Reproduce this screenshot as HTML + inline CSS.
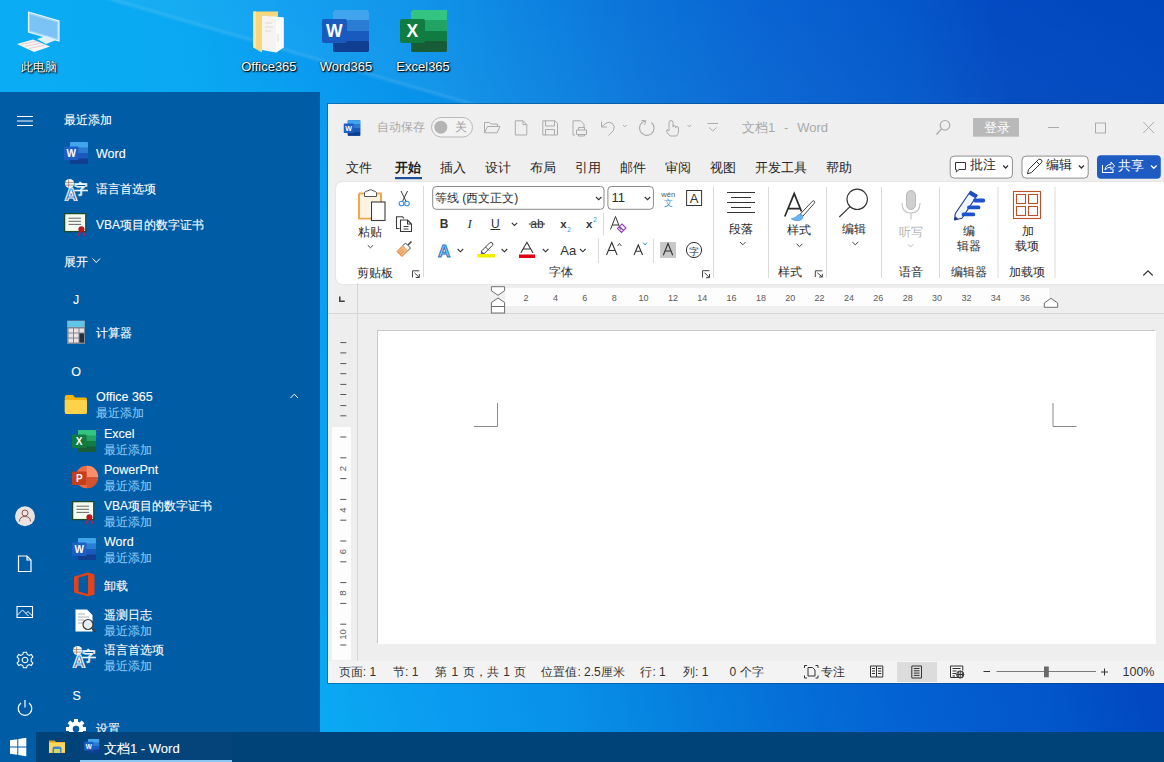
<!DOCTYPE html>
<html><head><meta charset="utf-8">
<style>
*{margin:0;padding:0;box-sizing:border-box}
html,body{width:1164px;height:762px;overflow:hidden}
body{position:relative;font-family:"Liberation Sans",sans-serif;background:#0a7ee0}
.a{position:absolute}
.t{position:absolute;white-space:nowrap;line-height:1}
#wall{left:0;top:0;width:1164px;height:762px;background:linear-gradient(78deg,#0ab0f5 0%,#0aa8f2 25.7%,#0a9cf0 34%,#0890e8 44%,#0682e0 51%,#0570d8 60%,#0462d2 69%,#0256c9 80%,#0149c1 87%,#0046bd 100%)}
#ray{left:0;top:0;width:1164px;height:762px;background:linear-gradient(196.2deg,rgba(255,255,255,0) 0%,rgba(255,255,255,.05) 27.45%,rgba(255,255,255,.13) 27.7%,rgba(255,255,255,0) 28.05%)}
#start{left:0;top:92px;width:320px;height:640px;background:#005ca4;color:#fff;overflow:hidden}
#start .t{margin-top:-92px}
#taskbar{left:0;top:732px;width:1164px;height:30px;background:#004379}
#word{left:328px;top:104px;width:836px;height:579px;background:#efefef;box-shadow:0 0 0 1px rgba(0,60,110,.45)}
.sm{font-size:12px;color:#fff;-webkit-text-stroke:0.2px rgba(255,255,255,.6)}
.sub{font-size:12px;color:#8cc6f4;-webkit-text-stroke:0.2px rgba(140,198,244,.6)}
.g{color:#262626}
.rb{font-size:12px;color:#2b2b2b}
.st{top:666px;font-size:12px;color:#333}
.tab{top:161px;font-size:13px;color:#262626}
.dl{font-size:12px;color:#fff;text-shadow:0 0 1.5px rgba(0,0,0,.85),1px 1px 1px rgba(0,0,0,.9),1px 1px 2px rgba(0,0,0,.5)}
</style></head><body>
<div id="wall" class="a"></div>
<div id="ray" class="a"></div>

<!-- desktop icons -->
<div id="desk">
<svg class="a" style="left:0;top:0" width="460" height="80" viewBox="0 0 460 80">
 <defs>
  <filter id="ts" x="-10%" y="-10%" width="120%" height="140%"><feDropShadow dx="1" dy="1" stdDeviation="0.6" flood-color="#000" flood-opacity="0.8"/></filter>
 </defs>
 <!-- this pc -->
 <polygon points="28.5,12 59,21 59,41 28.5,32" fill="#9fd6fb" stroke="#e8f6ff" stroke-width="1.2"/>
 <polygon points="30,14.5 57,22.5 57,38.5 30,30.5" fill="#7cc3f5"/>
 <polygon points="37,39 46,36 56,40 46,44" fill="#dff0fb"/>
 <polygon points="17,44 33,39.5 50,46.5 34,52" fill="#f3f6fa"/>
 <line x1="21" y1="44.5" x2="37" y2="41" stroke="#e9b9b0" stroke-width="0.7"/>
 <line x1="25" y1="46.5" x2="41" y2="43" stroke="#e9b9b0" stroke-width="0.7"/>
 <line x1="29" y1="48.5" x2="45" y2="45" stroke="#e9b9b0" stroke-width="0.7"/>
 <!-- folder -->
 <polygon points="253.3,11.6 278,11.6 278,18 262,15.5 262,52.5 253.3,47.5" fill="#f6d77c"/>
 <polygon points="253.3,11.6 256,11.6 256,48.5 253.3,47.5" fill="#fbe7a8"/>
 <polygon points="262,15.5 283.6,17.5 283.6,47.5 276,52.5 262,50" fill="#f6f4f0"/>
 <polygon points="271,16.5 283.6,17.5 283.6,47.5 276,52.5 276,19" fill="#fbfbfa"/>
 <path d="M265 23 H272 M265 27 H273 M265 31 H271 M278 34 V42" stroke="#d8d4cc" stroke-width="0.8"/>
 <!-- word -->
 <rect x="333" y="10" width="36" height="42" rx="2" fill="#185abd"/>
 <rect x="333" y="10" width="36" height="11" rx="2" fill="#41a5ee"/>
 <rect x="333" y="20" width="36" height="11" fill="#2b7cd3"/>
 <rect x="333" y="31" width="36" height="10" fill="#185abd"/>
 <rect x="333" y="41" width="36" height="11" rx="2" fill="#103f91"/>
 <rect x="322" y="19" width="25" height="24" rx="2" fill="#185abd"/>
 <text x="334.3" y="37.3" font-family="Liberation Sans" font-weight="bold" font-size="17.5" fill="#fff" text-anchor="middle">W</text>
 <!-- excel -->
 <rect x="411" y="10" width="36" height="42" rx="2" fill="#107c41"/>
 <rect x="411" y="10" width="36" height="11" rx="2" fill="#33c481"/>
 <rect x="429" y="10" width="18" height="11" fill="#33c481"/>
 <rect x="411" y="20" width="36" height="11" fill="#21a366"/>
 <rect x="411" y="31" width="36" height="10" fill="#107c41"/>
 <rect x="411" y="41" width="36" height="11" rx="2" fill="#185c37"/>
 <rect x="400" y="19" width="25" height="24" rx="2" fill="#107c41"/>
 <text x="412.3" y="37.3" font-family="Liberation Sans" font-weight="bold" font-size="17.5" fill="#fff" text-anchor="middle">X</text>
</svg>
<div class="t dl" style="left:20.5px;top:61px;">此电脑</div>
<div class="t dl" style="left:168.9px;width:200px;text-align:center;top:59.5px;font-size:13px">Office365</div>
<div class="t dl" style="left:246px;width:200px;text-align:center;top:59.5px;font-size:13px">Word365</div>
<div class="t dl" style="left:323.1px;width:200px;text-align:center;top:59.5px;font-size:13px">Excel365</div>
</div>

<!-- start menu -->
<div id="start" class="a">
<svg class="a" style="left:0;top:0" width="320" height="640" viewBox="0 92 320 640">
 <defs>
  <symbol id="wic" viewBox="0 0 24 22">
   <rect x="6" y="0" width="18" height="22" rx="1" fill="#185abd"/>
   <rect x="6" y="0" width="18" height="6" rx="1" fill="#41a5ee"/>
   <rect x="6" y="5.5" width="18" height="5.5" fill="#2b7cd3"/>
   <rect x="6" y="11" width="18" height="5.5" fill="#185abd"/>
   <rect x="6" y="16.5" width="18" height="5.5" rx="1" fill="#103f91"/>
   <rect x="0" y="4.5" width="14.5" height="13.5" rx="1" fill="#1d5fc4"/>
   <text x="7.2" y="15.3" font-family="Liberation Sans" font-weight="bold" font-size="10" fill="#fff" text-anchor="middle">W</text>
  </symbol>
  <symbol id="xic" viewBox="0 0 24 22">
   <rect x="6" y="0" width="18" height="22" rx="1" fill="#107c41"/>
   <rect x="6" y="0" width="18" height="6" rx="1" fill="#33c481"/>
   <rect x="6" y="5.5" width="18" height="5.5" fill="#21a366"/>
   <rect x="6" y="11" width="18" height="5.5" fill="#107c41"/>
   <rect x="6" y="16.5" width="18" height="5.5" rx="1" fill="#185c37"/>
   <rect x="0" y="4.5" width="14.5" height="13.5" rx="1" fill="#137a42"/>
   <text x="7.2" y="15.3" font-family="Liberation Sans" font-weight="bold" font-size="10" fill="#fff" text-anchor="middle">X</text>
  </symbol>
  <symbol id="cert" viewBox="0 0 24 24">
   <rect x="0.6" y="0.6" width="21.2" height="18" fill="#f4fbf0" stroke="#1d4a26" stroke-width="1.3"/>
   <path d="M4.5 5.2 H17 M4.5 8.3 H17 M4.5 11.4 H17" stroke="#555" stroke-width="0.9"/>
   <path d="M14.5 19.5 L13 23.5 L15.5 22.5 L17 19.5 Z M18.5 19.5 L20 23.5 L21.5 21.5 L20 19 Z" fill="#a8245e"/>
   <circle cx="17.4" cy="16.3" r="3" fill="#c0141e"/>
  </symbol>
  <symbol id="lang" viewBox="0 0 24 24">
   <text x="7" y="23.6" font-family="Liberation Sans" font-weight="bold" font-size="18" fill="#2f6fb5" stroke="#e8f4ff" stroke-width="1.2" text-anchor="middle">A</text>
   <circle cx="5.6" cy="6.5" r="4.6" fill="#f7f7f7"/>
   <path d="M1.2 5.6 H10 M1.2 8.1 H10 M4.6 2.5 V10.5" stroke="#8a5a4a" stroke-width="0.6"/>
   <text x="17" y="16.5" font-family="Liberation Sans" font-size="14" fill="#4a86c6" stroke="#eef6ff" stroke-width="0.8" text-anchor="middle">字</text>
  </symbol>
 </defs>
 <!-- hamburger -->
 <path d="M17 116.5 H33 M17 121 H33 M17 125.5 H33" stroke="#fff" stroke-width="1"/>
 <use href="#wic" x="64" y="142" width="24" height="22"/>
 <use href="#lang" x="64" y="177" width="24" height="24"/>
 <use href="#cert" x="64" y="213" width="24" height="24"/>
 <path d="M92.5 258.5 L96.3 262.5 L100 258.5" stroke="#fff" stroke-width="1" fill="none"/>
 <!-- calculator -->
 <rect x="67" y="320.5" width="18" height="23.5" fill="#7b8794"/>
 <rect x="67.5" y="321" width="17" height="6" fill="#63c5e6"/>
 <g fill="#ece3e0">
  <rect x="68.5" y="328.5" width="4.5" height="4"/><rect x="74" y="328.5" width="4.5" height="4"/><rect x="79.5" y="328.5" width="4.5" height="4"/>
  <rect x="68.5" y="333.5" width="4.5" height="4"/><rect x="74" y="333.5" width="4.5" height="4"/>
  <rect x="68.5" y="338.5" width="4.5" height="4"/><rect x="74" y="338.5" width="4.5" height="4"/>
 </g>
 <rect x="79.5" y="333.5" width="4.5" height="9" fill="#24303c"/>
 <!-- folder -->
 <path d="M64.8 397 Q64.8 395 66.8 395 H73 L75 397.5 H85 Q87 397.5 87 399.5 V412 Q87 414 85 414 H66.8 Q64.8 414 64.8 412 Z" fill="#f5b50c"/>
 <path d="M64.8 400 H85 Q87 400 87 402 V412 Q87 414 85 414 H66.8 Q64.8 414 64.8 412 Z" fill="#ffd24a"/>
 <path d="M290.5 398 L294.3 394.2 L298 398" stroke="#fff" stroke-width="1" fill="none"/>
 <use href="#xic" x="72" y="430" width="24" height="22"/>
 <!-- powerpoint -->
 <circle cx="86.8" cy="477" r="11.3" fill="#ed6c47"/>
 <path d="M86.8 465.7 A11.3 11.3 0 0 1 98.1 477 H86.8 Z" fill="#ff8f6b"/>
 <path d="M98.1 477 A11.3 11.3 0 0 1 86.8 488.3 V477 Z" fill="#d35230"/>
 <rect x="72" y="471.5" width="14.5" height="13.5" rx="1" fill="#c43e1c"/>
 <text x="79.3" y="482.3" font-family="Liberation Sans" font-weight="bold" font-size="10" fill="#fff" text-anchor="middle">P</text>
 <use href="#cert" x="72" y="501" width="24" height="24"/>
 <use href="#wic" x="72" y="538" width="24" height="22"/>
 <!-- office logo -->
 <path d="M74 576.5 L88 572.5 L94.5 574.5 V594.5 L88 596.5 L74 592.5 Z M78.5 577.5 V591.5 L88 594 V575 Z" fill="#e3421b" fill-rule="evenodd"/>
 <!-- telemetry -->
 <path d="M75.5 609.5 H87 L92.5 615 V631.5 H75.5 Z" fill="#fff"/>
 <path d="M78 614 H85 M78 617 H89 M78 620 H84 M78 623 H83" stroke="#999" stroke-width="0.8"/>
 <circle cx="88" cy="624.5" r="5" fill="#e8eef5" stroke="#3a3a3a" stroke-width="1.2"/>
 <path d="M91.5 628 L95.5 632" stroke="#3a3a3a" stroke-width="1.6"/>
 <use href="#lang" x="72" y="644" width="24" height="24"/>
 <!-- settings gear -->
 <g transform="translate(76,729)"><circle r="7.5" fill="#fff"/><g fill="#fff"><rect x="-2" y="-10" width="4" height="20"/><rect x="-2" y="-10" width="4" height="20" transform="rotate(45)"/><rect x="-2" y="-10" width="4" height="20" transform="rotate(90)"/><rect x="-2" y="-10" width="4" height="20" transform="rotate(135)"/></g><circle r="3.3" fill="#005ca4"/></g>
 <!-- left rail -->
 <circle cx="25" cy="516.3" r="10" fill="#e9e4e2"/>
 <circle cx="25" cy="513" r="3" fill="none" stroke="#8a5a50" stroke-width="1"/>
 <path d="M19.5 521.5 Q19.5 516.5 25 516.5 Q30.5 516.5 30.5 521.5" fill="none" stroke="#8a5a50" stroke-width="1"/>
 <path d="M18.5 556 H27 L31 560 V571.5 H18.5 Z M27 556 V560 H31" fill="none" stroke="#fff" stroke-width="1.2"/>
 <path d="M17 606.5 H32.5 V617.5 H17 Z" fill="none" stroke="#fff" stroke-width="1.1"/>
 <path d="M17.5 615 L22.5 610 L28.5 616 M26 613.5 L28 611.5 L32.5 616" fill="none" stroke="#fff" stroke-width="1"/>
 <g transform="translate(25,660)" fill="none" stroke="#fff" stroke-width="1.1">
  <path d="M-1.6 -7.8 L1.6 -7.8 L2.2 -5.6 L4.2 -4.6 L6.3 -5.6 L7.9 -3 L6.2 -1.3 L6.2 1.3 L7.9 3 L6.3 5.6 L4.2 4.6 L2.2 5.6 L1.6 7.8 L-1.6 7.8 L-2.2 5.6 L-4.2 4.6 L-6.3 5.6 L-7.9 3 L-6.2 1.3 L-6.2 -1.3 L-7.9 -3 L-6.3 -5.6 L-4.2 -4.6 L-2.2 -5.6 Z"/>
  <circle r="2.8"/>
 </g>
 <path d="M21 703 A6.8 6.8 0 1 0 29 703" fill="none" stroke="#fff" stroke-width="1.2"/>
 <path d="M25 700 V707.5" stroke="#fff" stroke-width="1.2"/>
</svg>
<div class="t sm" style="left:64px;top:114px">最近添加</div>
<div class="t sm" style="left:96px;top:148px;font-size:12.5px">Word</div>
<div class="t sm" style="left:96px;top:183px">语言首选项</div>
<div class="t sm" style="left:96px;top:219px">VBA项目的数字证书</div>
<div class="t sm" style="left:64px;top:256px">展开</div>
<div class="t sm" style="left:73px;top:293.8px;font-size:12.5px">J</div>
<div class="t sm" style="left:96px;top:327px">计算器</div>
<div class="t sm" style="left:71.3px;top:366.2px;font-size:12.5px">O</div>
<div class="t sm" style="left:96px;top:390.8px;font-size:12.5px">Office 365</div>
<div class="t sub" style="left:96px;top:407px">最近添加</div>
<div class="t sm" style="left:104px;top:427.6px;font-size:12.5px">Excel</div>
<div class="t sub" style="left:104px;top:444px">最近添加</div>
<div class="t sm" style="left:104px;top:463.5px;font-size:12.5px">PowerPnt</div>
<div class="t sub" style="left:104px;top:480px">最近添加</div>
<div class="t sm" style="left:104px;top:500px">VBA项目的数字证书</div>
<div class="t sub" style="left:104px;top:516px">最近添加</div>
<div class="t sm" style="left:104px;top:535.5px;font-size:12.5px">Word</div>
<div class="t sub" style="left:104px;top:552px">最近添加</div>
<div class="t sm" style="left:104px;top:580px">卸载</div>
<div class="t sm" style="left:104px;top:609px">遥测日志</div>
<div class="t sub" style="left:104px;top:625px">最近添加</div>
<div class="t sm" style="left:104px;top:644px">语言首选项</div>
<div class="t sub" style="left:104px;top:660px">最近添加</div>
<div class="t sm" style="left:72.5px;top:689.8px;font-size:12.5px">S</div>
<div class="t sm" style="left:96px;top:723px">设置</div>
</div>

<!-- taskbar -->
<div id="taskbar" class="a">
<div class="a" style="left:0;top:0;width:36px;height:30px;background:#005ca4"></div>
<div class="a" style="left:80px;top:0;width:152px;height:30px;background:#04447a"></div>
<div class="a" style="left:80px;top:28px;width:152px;height:2px;background:#8cc6f2"></div>
<svg class="a" style="left:0;top:0" width="240" height="30" viewBox="0 732 240 30">
 <path d="M10 740.3 L17.3 739.2 V746.5 H10 Z M18.3 739 L26.3 737.8 V746.5 H18.3 Z M10 747.5 H17.3 V754.8 L10 753.7 Z M18.3 747.5 H26.3 V756.2 L18.3 755 Z" fill="#fff"/>
 <!-- explorer -->
 <path d="M49 740.5 H54.5 L56 742 H65 V752.8 H49 Z" fill="#e8a317"/>
 <rect x="49" y="742.5" width="16" height="10.3" fill="#ffd65c"/>
 <path d="M52.5 752.8 V748.5 Q52.5 746.5 54.5 746.5 H59.5 Q61.5 746.5 61.5 748.5 V752.8 H59.8 V749 H54.2 V752.8 Z" fill="#3f86d0"/>
 <rect x="54.2" y="749.2" width="5.6" height="3.6" fill="#c8e06a"/>
 <use href="#wic" x="84" y="739" width="15.5" height="14"/>
</svg>
<div class="t" style="left:104px;top:10px;font-size:13px;color:#fff;-webkit-text-stroke:0.2px rgba(255,255,255,.6)">文档1 - Word</div>
</div>

<!-- word window -->
<div id="word" class="a"></div>
<!-- ribbon panel -->
<div class="a" style="left:336px;top:181.5px;width:840px;height:102px;background:#fff;border-radius:6px;box-shadow:0 0 1.5px rgba(0,0,0,.18)"></div>
<!-- ruler + doc -->
<div class="a" style="left:328px;top:313px;width:836px;height:348px;background:#eeeeee"></div>
<div class="a" style="left:328px;top:313px;width:836px;height:1px;background:#d6d6d6"></div>
<div class="a" style="left:357px;top:283px;width:1px;height:378px;background:#d6d6d6"></div>
<div class="a" style="left:505px;top:288px;width:544px;height:18px;background:#fdfdfd"></div>
<div class="a" style="left:332px;top:427px;width:19px;height:233px;background:#fdfdfd"></div>
<div class="a" style="left:378px;top:331px;width:778px;height:313px;background:#fff;box-shadow:-1px -1px 0 #c8c8c8"></div>

<!-- title bar -->
<svg class="a" style="left:328px;top:104px" width="836" height="180" viewBox="328 104 836 180">
 <use href="#wic" x="343.5" y="120" width="17" height="16"/>
 <rect x="431.5" y="117.5" width="41" height="19.5" rx="9.75" fill="#f3f3f3" stroke="#b9b9b9" stroke-width="1"/>
 <circle cx="440.8" cy="127.2" r="6.5" fill="#b4b4b4"/>
 <g fill="none" stroke="#ababab" stroke-width="1">
  <!-- open -->
  <path d="M484.5 132.8 V122.5 H489.5 L491 124 H497.5 V126.5 M484.5 132.8 L487.5 126.5 H500 L497 132.8 Z"/>
  <!-- new -->
  <path d="M515.3 120.8 H523 L526.8 124.6 V135 H515.3 Z M523 120.8 V124.6 H526.8"/>
  <!-- save -->
  <path d="M542.8 120.8 H555 L557.5 123.3 V135 H542.8 Z M545.5 120.8 V126 H554.5 V120.8 M545.5 135 V129.5 H554.5 V135"/>
  <!-- print preview -->
  <path d="M575 135 H573 V120.8 H580.5 L584 124.3 V128 M576.5 130 H586.5 V134.5 H576.5 Z M578.5 130 V127.5 H584.5 V130 M578.5 134.5 V136 H584.5 V134.5"/>
  <!-- undo -->
  <path d="M601.5 121.5 V127 H607 M602 126.5 L606 123.2 Q609.5 121 612.5 123.5 Q615.5 126.5 613.5 130.5 L608.5 135.5"/>
  <path d="M623 125 L624.8 126.8 L626.6 125"/>
  <!-- redo circle -->
  <path d="M651.5 122.5 A7.3 7.3 0 1 1 645 121" stroke-width="1.1"/>
  <path d="M641.5 120.5 L645.8 120.8 L644.5 124.8"/>
  <!-- touch -->
  <path d="M669 131 V122.5 Q669 120.5 671 120.5 Q673 120.5 673 122.5 V127 M669 131 L667 129.5 Q666 131 667.5 133 L670 136 H676.5 Q678.5 134 678.5 131 V128 Q678.5 126.5 677 126.5 Q675.5 126.5 675.5 128 M673 127 Q673 125.5 674.3 125.5 Q675.5 125.5 675.5 127.5"/>
  <path d="M687.5 125 L689.3 126.8 L691.1 125"/>
  <!-- customize -->
  <path d="M707.5 123.5 H718"/>
  <path d="M709 127.5 L712.8 131 L716.5 127.5"/>
  <!-- search -->
  <circle cx="945" cy="125.3" r="4.8" stroke-width="1.2"/>
  <path d="M941.5 129 L936.5 134.5" stroke-width="1.3"/>
  <!-- min max close -->
  <path d="M1048 127.5 H1059"/>
  <rect x="1095.5" y="123" width="10" height="10"/>
  <path d="M1143.3 122 L1154 133 M1154 122 L1143.3 133"/>
 </g>
 <rect x="973" y="118" width="46" height="18.7" fill="#b9b9b9"/>
 <!-- tab underline -->
 <rect x="395" y="177" width="27" height="2.2" fill="#1e4f9c"/>
 <!-- buttons -->
 <rect x="950.2" y="156.1" width="62.2" height="22" rx="4" fill="#fff" stroke="#8f8f8f" stroke-width="1"/>
 <rect x="1022" y="156.1" width="66.2" height="22" rx="4" fill="#fff" stroke="#8f8f8f" stroke-width="1"/>
 <rect x="1097" y="155.2" width="63.8" height="23.5" rx="4" fill="#1e5cc4"/>
 <g fill="none" stroke="#333" stroke-width="1">
  <path d="M955.5 162.5 H965.5 V169.5 H959 L956.3 172 V169.5 H955.5 Z"/>
  <path d="M1003.2 165.5 L1005.6 168 L1008 165.5" stroke-width="1.3"/>
  <path d="M1027.5 173.8 L1028.5 169.5 L1038.5 159.5 Q1040 158.5 1041.5 160 Q1042.5 161.5 1041.5 162.5 L1031.5 172.5 Z M1036.5 161.5 L1039.5 164.5"/>
  <path d="M1078.9 165.5 L1081.4 168 L1083.9 165.5" stroke-width="1.3"/>
 </g>
 <g fill="none" stroke="#fff" stroke-width="1.1">
  <path d="M1102.5 165 V172.5 H1113 V169"/>
  <path d="M1105 170 Q1105.5 164.5 1111 164.5 V162 L1114.5 166 L1111 169.5 V167 Q1107.5 167 1105 170 Z" stroke-width="1"/>
  <path d="M1151 165.5 L1153.8 168.3 L1156.6 165.5" stroke-width="1.3"/>
 </g>
</svg>
<div class="t" style="left:376.5px;top:120.5px;font-size:12px;color:#a9a9a9">自动保存</div>
<div class="t" style="left:455px;top:121px;font-size:12px;color:#a0a0a0">关</div>
<div class="t" style="left:742px;top:121px;font-size:13px;color:#a9a9a9;word-spacing:0.8px">文档1&nbsp; -&nbsp; Word</div>
<div class="t" style="left:984px;top:121.5px;font-size:12.5px;color:#fff">登录</div>
<div class="t tab" style="left:346px">文件</div>
<div class="t tab" style="left:395px;font-weight:bold;color:#1b1b1b">开始</div>
<div class="t tab" style="left:440px">插入</div>
<div class="t tab" style="left:485px">设计</div>
<div class="t tab" style="left:530px">布局</div>
<div class="t tab" style="left:575px">引用</div>
<div class="t tab" style="left:620px">邮件</div>
<div class="t tab" style="left:665px">审阅</div>
<div class="t tab" style="left:710px">视图</div>
<div class="t tab" style="left:755px">开发工具</div>
<div class="t tab" style="left:826px">帮助</div>
<div class="t" style="left:970px;top:158.4px;font-size:13px;color:#262626">批注</div>
<div class="t" style="left:1046px;top:158.4px;font-size:13px;color:#262626">编辑</div>
<div class="t" style="left:1118px;top:158.5px;font-size:13px;color:#fff">共享</div>


<!-- ribbon contents -->
<svg class="a" style="left:328px;top:180px" width="836" height="140" viewBox="328 180 836 140">
 <g stroke="#dadada" stroke-width="1">
  <path d="M423.5 186 V277 M713.5 186.5 V278 M768.5 187 V278 M826.5 187 V278 M881.5 187 V278 M939.5 187 V278 M998 187 V278 M1055 187 V278"/>
  <path d="M603.5 212.5 V235.5 M598.5 238.5 V263 M653.5 238.5 V263"/>
 </g>
 <!-- paste -->
 <path d="M359 193.5 H364 M376 193.5 H381 V203 M359 193.5 V218.5 H371" fill="none" stroke="#f0a84a" stroke-width="2"/>
 <path d="M360 195 V217.5 H370 V203 H380 V195 Z" fill="#fdf3e3"/>
 <path d="M364.5 196.5 V192.5 Q366 190.8 368 190.8 Q369 189.8 370.5 189.8 Q372 189.8 373 190.8 Q375 190.8 376.5 192.5 V196.5 Z" fill="#fff" stroke="#555" stroke-width="1"/>
 <rect x="371.5" y="202" width="13.5" height="18.5" fill="#fff" stroke="#3b3b3b" stroke-width="1.1"/>
 <path d="M367.8 245.3 L370.4 247.8 L373 245.3" fill="none" stroke="#444" stroke-width="1"/>
 <!-- cut -->
 <g fill="none" stroke="#3a3a3a" stroke-width="1"><path d="M401 191 L406.3 202 M407.5 191 L402.2 202"/></g>
 <circle cx="401.5" cy="203.5" r="2.3" fill="none" stroke="#3d8fd8" stroke-width="1.1"/>
 <circle cx="407" cy="203.5" r="2.3" fill="none" stroke="#3d8fd8" stroke-width="1.1"/>
 <!-- copy -->
 <g fill="none" stroke="#3a3a3a" stroke-width="1.1">
  <path d="M399.5 228.5 H396.5 V216.8 H402.5 L404 218.3"/>
  <path d="M400.5 220 H407.5 L411.5 224 V231.5 H400.5 Z M407.5 220 V224 H411.5"/>
  <path d="M403.5 226.5 H408.5 M403.5 229 H408.5"/>
 </g>
 <!-- format painter -->
 <path d="M397 251.5 L403 245.5 L408 250.5 L402 256.5 Z" fill="#f5b985" stroke="#e07a2b" stroke-width="1"/>
 <path d="M403 245.5 L405.5 243 L410.5 248 L408 250.5" fill="#fff" stroke="#444" stroke-width="1"/>
 <path d="M408 245 L411.5 241.5" stroke="#444" stroke-width="1.6"/>
 <path d="M398.5 253 L402 249.5 M400 254.8 L404 250.8" stroke="#e07a2b" stroke-width="0.8"/>
 <!-- launchers -->
 <g fill="none" stroke="#444" stroke-width="1">
  <path d="M412.5 277.5 V270.8 H419.3 M414.5 272.8 L419.3 277.5 M419.3 274 V277.5 H415.8"/>
  <path d="M702.5 277.7 V270.7 H709.5 M704.5 272.7 L709.5 277.7 M709.5 274 V277.7 H706"/>
  <path d="M815.3 277 V270.8 H822.3 M817.3 272.8 L822.3 277 M822.3 273.8 V277 H819"/>
 </g>
 <!-- font boxes -->
 <rect x="432.7" y="186.5" width="171.3" height="22.8" rx="3.5" fill="#fff" stroke="#8a8a8a" stroke-width="1"/>
 <rect x="607.9" y="186.5" width="45.5" height="22.8" rx="3.5" fill="#fff" stroke="#8a8a8a" stroke-width="1"/>
 <g fill="none" stroke="#333" stroke-width="1.1">
  <path d="M596 197 L598.7 199.7 L601.4 197"/>
  <path d="M644.8 197 L647.5 199.7 L650.2 197"/>
  <path d="M511.8 222.8 L514.5 225.5 L517.2 222.8"/>
  <path d="M457.6 249 L460.4 251.8 L463.2 249"/>
  <path d="M501.6 249 L504.4 251.8 L507.2 249"/>
  <path d="M542.8 249 L545.6 251.8 L548.4 249"/>
  <path d="M580 249 L582.8 251.8 L585.6 249"/>
 </g>
 <!-- wen -->
 <text x="668.2" y="197" font-family="Liberation Sans" font-size="7.5" fill="#555" text-anchor="middle">wén</text>
 <text x="668.2" y="206" font-family="Liberation Sans" font-size="8.5" fill="#3f8fd6" text-anchor="middle">文</text>
 <!-- char border -->
 <rect x="686.6" y="190.5" width="15" height="15" fill="none" stroke="#333" stroke-width="1"/>
 <text x="694.1" y="203.2" font-family="Liberation Sans" font-size="13" fill="#333" text-anchor="middle">A</text>
 <!-- row2 -->
 <text x="444.2" y="227.6" font-family="Liberation Sans" font-weight="bold" font-size="12" fill="#333" text-anchor="middle">B</text>
 <text x="469.7" y="227.6" font-family="Liberation Serif" font-style="italic" font-size="13" fill="#333" text-anchor="middle">I</text>
 <text x="495.3" y="227.6" font-family="Liberation Sans" font-size="12" fill="#333" text-anchor="middle">U</text>
 <path d="M490.5 229.5 H500.2" stroke="#333" stroke-width="1"/>
 <text x="537" y="227.6" font-family="Liberation Sans" font-size="12" fill="#333" text-anchor="middle">ab</text>
 <path d="M528.8 224 H545" stroke="#333" stroke-width="1"/>
 <text x="563.5" y="227.6" font-family="Liberation Sans" font-weight="bold" font-size="11.5" fill="#333" text-anchor="middle">x</text>
 <text x="569" y="231.5" font-family="Liberation Sans" font-size="6.5" fill="#3f8fd6" text-anchor="middle">2</text>
 <text x="589.3" y="227.6" font-family="Liberation Sans" font-weight="bold" font-size="11.5" fill="#333" text-anchor="middle">x</text>
 <text x="595" y="221.5" font-family="Liberation Sans" font-size="6.5" fill="#3f8fd6" text-anchor="middle">2</text>
 <!-- clear formatting -->
 <path d="M610.5 229.5 L615.5 216.5 L620.5 229.5 M612.3 225 H618.7" fill="none" stroke="#333" stroke-width="1"/>
 <path d="M617.5 228.5 L622 224 L626 228 L621.5 232.5 Z M619.5 226.5 L623.5 230.5" fill="none" stroke="#8e3fb6" stroke-width="1.1"/>
 <!-- row3 text effects -->
 <text x="444.2" y="256.5" font-family="Liberation Sans" font-weight="bold" font-size="17" fill="#9fd1f5" stroke="#1f77c4" stroke-width="1" text-anchor="middle">A</text>
 <!-- highlighter -->
 <path d="M481.5 251 L489.5 243 Q491 241.8 492.3 243 Q493.5 244.3 492.3 245.5 L484.3 253.5 H481.5 Z" fill="#fff" stroke="#444" stroke-width="1"/>
 <path d="M481.5 251 L484.3 253.5 H480.5 Z" fill="#5b5fc7"/>
 <path d="M485.5 247 L489 250.5" stroke="#444" stroke-width="1"/>
 <rect x="477.5" y="254" width="17.5" height="3.5" fill="#f2f000"/>
 <!-- font color -->
 <path d="M520.8 253 L526.9 242.3 L533 253 M523 249 H530.8" fill="none" stroke="#333" stroke-width="1.1"/>
 <rect x="519" y="254.5" width="16" height="3.5" fill="#e00010"/>
 <text x="568.2" y="255" font-family="Liberation Sans" font-size="13" fill="#333" text-anchor="middle">Aa</text>
 <!-- grow/shrink -->
 <path d="M606.5 255 L611.8 242.5 L617.1 255 M608.5 250.5 H615.1" fill="none" stroke="#333" stroke-width="1.1"/>
 <path d="M617.5 246 L619.5 243.5 L621.5 246" fill="none" stroke="#333" stroke-width="0.9"/>
 <path d="M634 255 L638.3 245 L642.6 255 M635.6 251.3 H641" fill="none" stroke="#333" stroke-width="1.1"/>
 <path d="M643 242.5 L645 245 L647 242.5" fill="none" stroke="#3f8fd6" stroke-width="1"/>
 <!-- shading -->
 <rect x="660.1" y="242" width="15.9" height="16" fill="#c8c8c8"/>
 <path d="M663.3 255.3 L668 243.5 L672.7 255.3 M665 251 H671" fill="none" stroke="#333" stroke-width="1.1"/>
 <!-- enclosed -->
 <circle cx="694" cy="250" r="7.6" fill="none" stroke="#333" stroke-width="1"/>
 <text x="694" y="254.5" font-family="Liberation Sans" font-size="10" fill="#333" text-anchor="middle">字</text>
 <!-- paragraph -->
 <path d="M727 192.5 H755 M731 197.5 H751 M727 202.5 H755 M731 207.5 H751 M727 212.5 H755" stroke="#333" stroke-width="1.1"/>
 <path d="M740 242 L742.8 244.8 L745.6 242" fill="none" stroke="#444" stroke-width="1"/>
 <!-- styles -->
 <path d="M784.8 216.5 L794.2 193.6 L801.5 211.5 M788.8 208.6 H800.5" fill="none" stroke="#2a2a2a" stroke-width="1.7"/>
 <path d="M800.3 214 L812.3 201.3 Q813.8 200.3 814.5 201.3 Q815 202.5 814 203.5 L802.8 216.3 Z" fill="#fff" stroke="#333" stroke-width="0.9"/>
 <path d="M791.2 218.8 Q795.5 218.3 798.3 214.8 Q800.3 213.3 802.8 216 Q803.3 219.5 799 220.6 Q794.5 221.3 791.2 218.8 Z" fill="#6cb5f2" stroke="#3a8ad8" stroke-width="0.6"/>
 <path d="M796.6 243.8 L799.5 246.7 L802.4 243.8" fill="none" stroke="#444" stroke-width="1"/>
 <!-- find -->
 <circle cx="857.2" cy="199.3" r="10.2" fill="none" stroke="#333" stroke-width="1.1"/>
 <path d="M850 206.6 L839.3 217" stroke="#333" stroke-width="1.1"/>
 <path d="M852.3 242 L855.3 244.8 L858.3 242" fill="none" stroke="#444" stroke-width="1"/>
 <!-- mic -->
 <rect x="906.5" y="190.5" width="9" height="19" rx="4.5" fill="#cfcfcf" stroke="#b9b9b9" stroke-width="1"/>
 <path d="M902 203 Q902 213 911 213 Q920 213 920 203 M911 213 V219.5" fill="none" stroke="#c6c6c6" stroke-width="1.2"/>
 <path d="M908 244.3 L910.7 247 L913.4 244.3" fill="none" stroke="#bbb" stroke-width="1"/>
 <!-- editor -->
 <path d="M970.5 191.3 L977.2 195.3 L962 218.3 L954.5 220 L955.3 213.5 Z" fill="#eef6ff" stroke="#1f3a8a" stroke-width="1.1" stroke-linejoin="round"/>
 <path d="M970.5 191.3 L977.2 195.3 L975.3 198.3 L968.6 194.3 Z" fill="#1e4fc8"/>
 <path d="M954.5 220 L955.3 216.3 L958 218.8 Z" fill="#1f3a8a"/>
 <path d="M975 200.5 H983.3 M969 207.4 H978.5 M963.5 214.4 H973.3" stroke="#1e52cc" stroke-width="3.8" stroke-linecap="round"/>
 <!-- addins -->
 <g fill="none" stroke="#b5532b" stroke-width="1.1">
 <rect x="1013.5" y="191.5" width="27" height="27"/>
 <rect x="1016.5" y="194.5" width="9" height="9"/>
 <rect x="1028.5" y="194.5" width="9" height="9"/>
 <rect x="1016.5" y="206.5" width="9" height="9"/>
 <rect x="1028.5" y="206.5" width="9" height="9"/>
 </g>
 <path d="M1143.3 275.5 L1148 270.8 L1152.7 275.5" fill="none" stroke="#333" stroke-width="1.1"/>
</svg>
<div class="t rb" style="left:357.5px;top:225.5px">粘贴</div>
<div class="t rb" style="left:356.5px;top:266.5px">剪贴板</div>
<div class="t rb" style="left:434.8px;top:192px">等线 (西文正文)</div>
<div class="t rb" style="left:611.5px;top:191px;font-size:13px">11</div>
<div class="t rb" style="left:549.2px;top:266px">字体</div>
<div class="t rb" style="left:729.3px;top:222.5px">段落</div>
<div class="t rb" style="left:786.5px;top:224px">样式</div>
<div class="t rb" style="left:778px;top:266px">样式</div>
<div class="t rb" style="left:842.2px;top:222.5px">编辑</div>
<div class="t rb" style="left:898.6px;top:226px;color:#b4b4b4">听写</div>
<div class="t rb" style="left:899.3px;top:265.5px">语音</div>
<div class="t rb" style="left:963.1px;top:224.8px">编</div>
<div class="t rb" style="left:957px;top:239.5px">辑器</div>
<div class="t rb" style="left:950.7px;top:265.5px">编辑器</div>
<div class="t rb" style="left:1021.5px;top:224.8px">加</div>
<div class="t rb" style="left:1015.4px;top:239.5px">载项</div>
<div class="t rb" style="left:1008.6px;top:265.5px">加载项</div>


<!-- ruler/doc svg -->
<svg class="a" style="left:328px;top:283px" width="836" height="400" viewBox="328 283 836 400">
 <path d="M339.8 296.5 V301.3 H344.8" fill="none" stroke="#444" stroke-width="1.6"/>
 <g fill="#fff" stroke="#6e6e6e" stroke-width="1">
  <path d="M491.4 286.7 H504.6 V290.7 L498 295.3 L491.4 290.7 Z"/>
  <path d="M491.4 306.5 V302.5 L498 298 L504.6 302.5 V306.5 Z"/>
  <rect x="491.4" y="306.5" width="13.2" height="6.5"/>
  <path d="M1044.3 307.3 V303 L1051 298.3 L1057.7 303 V307.3 Z"/>
 </g>
<text x="526.1" y="301" font-family="Liberation Sans" font-size="9" fill="#5a5a5a" text-anchor="middle">2</text>
<text x="555.5" y="301" font-family="Liberation Sans" font-size="9" fill="#5a5a5a" text-anchor="middle">4</text>
<text x="584.8" y="301" font-family="Liberation Sans" font-size="9" fill="#5a5a5a" text-anchor="middle">6</text>
<text x="614.2" y="301" font-family="Liberation Sans" font-size="9" fill="#5a5a5a" text-anchor="middle">8</text>
<text x="643.5" y="301" font-family="Liberation Sans" font-size="9" fill="#5a5a5a" text-anchor="middle">10</text>
<text x="672.9" y="301" font-family="Liberation Sans" font-size="9" fill="#5a5a5a" text-anchor="middle">12</text>
<text x="702.2" y="301" font-family="Liberation Sans" font-size="9" fill="#5a5a5a" text-anchor="middle">14</text>
<text x="731.6" y="301" font-family="Liberation Sans" font-size="9" fill="#5a5a5a" text-anchor="middle">16</text>
<text x="760.9" y="301" font-family="Liberation Sans" font-size="9" fill="#5a5a5a" text-anchor="middle">18</text>
<text x="790.2" y="301" font-family="Liberation Sans" font-size="9" fill="#5a5a5a" text-anchor="middle">20</text>
<text x="819.6" y="301" font-family="Liberation Sans" font-size="9" fill="#5a5a5a" text-anchor="middle">22</text>
<text x="849.0" y="301" font-family="Liberation Sans" font-size="9" fill="#5a5a5a" text-anchor="middle">24</text>
<text x="878.3" y="301" font-family="Liberation Sans" font-size="9" fill="#5a5a5a" text-anchor="middle">26</text>
<text x="907.7" y="301" font-family="Liberation Sans" font-size="9" fill="#5a5a5a" text-anchor="middle">28</text>
<text x="937.0" y="301" font-family="Liberation Sans" font-size="9" fill="#5a5a5a" text-anchor="middle">30</text>
<text x="966.4" y="301" font-family="Liberation Sans" font-size="9" fill="#5a5a5a" text-anchor="middle">32</text>
<text x="995.7" y="301" font-family="Liberation Sans" font-size="9" fill="#5a5a5a" text-anchor="middle">34</text>
<text x="1025.1" y="301" font-family="Liberation Sans" font-size="9" fill="#5a5a5a" text-anchor="middle">36</text>
<path d="M340.3 342.6 H346.3" stroke="#555" stroke-width="1"/>
<path d="M340.3 352.9 H346.3" stroke="#555" stroke-width="1"/>
<path d="M340.3 363.6 H346.3" stroke="#555" stroke-width="1"/>
<path d="M340.3 373.7 H346.3" stroke="#555" stroke-width="1"/>
<path d="M340.3 384.4 H346.3" stroke="#555" stroke-width="1"/>
<path d="M340.3 394.5 H346.3" stroke="#555" stroke-width="1"/>
<path d="M340.3 405.6 H346.3" stroke="#555" stroke-width="1"/>
<path d="M340.3 415.8 H346.3" stroke="#555" stroke-width="1"/>
<path d="M340.3 437.0 H346.3" stroke="#555" stroke-width="1"/>
<path d="M340.3 457.8 H346.3" stroke="#555" stroke-width="1"/>
<path d="M340.3 478.6 H346.3" stroke="#555" stroke-width="1"/>
<path d="M340.3 499.4 H346.3" stroke="#555" stroke-width="1"/>
<path d="M340.3 520.2 H346.3" stroke="#555" stroke-width="1"/>
<path d="M340.3 541.0 H346.3" stroke="#555" stroke-width="1"/>
<path d="M340.3 561.8 H346.3" stroke="#555" stroke-width="1"/>
<path d="M340.3 582.6 H346.3" stroke="#555" stroke-width="1"/>
<path d="M340.3 603.4 H346.3" stroke="#555" stroke-width="1"/>
<path d="M340.3 624.2 H346.3" stroke="#555" stroke-width="1"/>
<path d="M340.3 645.0 H346.3" stroke="#555" stroke-width="1"/>
<text x="0" y="0" transform="translate(346.3 468.6) rotate(-90)" font-family="Liberation Sans" font-size="9.5" fill="#5a5a5a" text-anchor="middle">2</text>
<text x="0" y="0" transform="translate(346.3 510.1) rotate(-90)" font-family="Liberation Sans" font-size="9.5" fill="#5a5a5a" text-anchor="middle">4</text>
<text x="0" y="0" transform="translate(346.3 551.5) rotate(-90)" font-family="Liberation Sans" font-size="9.5" fill="#5a5a5a" text-anchor="middle">6</text>
<text x="0" y="0" transform="translate(346.3 593.0) rotate(-90)" font-family="Liberation Sans" font-size="9.5" fill="#5a5a5a" text-anchor="middle">8</text>
<text x="0" y="0" transform="translate(346.3 634.4) rotate(-90)" font-family="Liberation Sans" font-size="9.5" fill="#5a5a5a" text-anchor="middle">10</text>

 <g fill="none" stroke="#8a8a8a" stroke-width="1">
  <path d="M497.5 403 V426.5 H474"/>
  <path d="M1053 403 V426.5 H1076.5"/>
 </g>
</svg>

<!-- status bar -->
<div class="a" style="left:328px;top:661px;width:836px;height:22px;background:#f3f3f3"></div>
<div class="a" style="left:897px;top:662px;width:40px;height:20px;background:#dcdcdc"></div>
<svg class="a" style="left:780px;top:661px" width="384" height="22" viewBox="780 661 384 22">
 <g fill="none" stroke="#333" stroke-width="1">
  <path d="M804.5 668 V665.5 H807 M815.5 665.5 H818 V668 M818 675.5 V678 H815.5 M807 678 H804.5 V675.5"/>
  <path d="M808 667.5 H812.5 L815 670 V676 H808 Z"/>
  <path d="M870.5 666 H876.5 V677 H870.5 Z M876.5 666 H882.8 V677 H876.5 M872 668.5 H875 M872 671 H875 M872 673.5 H875 M878 668.5 H881.3 M878 671 H881.3 M878 673.5 H881.3"/>
  <path d="M911.8 666 H921.5 V678 H911.8 Z M913.8 668.5 H919.5 M913.8 670.8 H919.5 M913.8 673.1 H919.5 M913.8 675.4 H919.5"/>
  <path d="M959.5 677.5 H950.5 V666 H962.8 V670.5 M952.5 668.5 H960.5 M952.5 671 H956.5 M952.5 673.5 H956 M952.5 676 H955"/>
  <circle cx="960.2" cy="674.5" r="3.6"/>
  <path d="M956.6 674.5 H963.8 M960.2 670.9 V678.1 M958.5 671.5 Q957.5 674.5 958.5 677.5 M962 671.5 Q963 674.5 962 677.5"/>
  <path d="M983.5 671.5 H990"/>
  <path d="M1101 672 H1108 M1104.5 668.5 V675.5"/>
 </g>
 <path d="M996.5 671.5 H1096" stroke="#7a7a7a" stroke-width="1"/>
 <rect x="1044" y="666.5" width="4.8" height="10.8" fill="#6a6a6a"/>
</svg>
<div class="t st" style="left:338.8px">页面: 1</div>
<div class="t st" style="left:393px">节: 1</div>
<div class="t st" style="left:435px;word-spacing:1.2px">第 1 页，共 1 页</div>
<div class="t st" style="left:541.4px">位置值: 2.5厘米</div>
<div class="t st" style="left:640.4px">行: 1</div>
<div class="t st" style="left:683px">列: 1</div>
<div class="t st" style="left:729.5px">0 个字</div>
<div class="t st" style="left:820.9px">专注</div>
<div class="t st" style="left:1122.5px;font-size:12.5px">100%</div>


</body></html>
